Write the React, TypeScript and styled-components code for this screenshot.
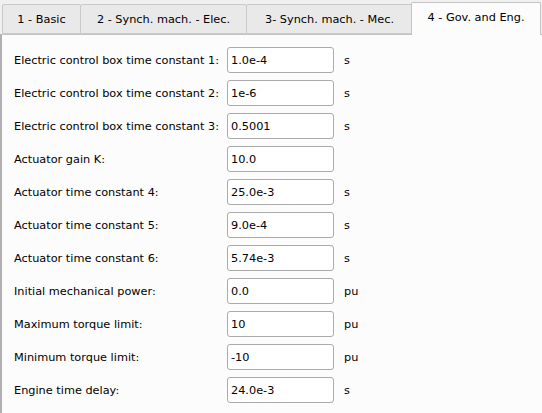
import React from "react";
import styled, { createGlobalStyle } from "styled-components";

const GlobalStyle = createGlobalStyle`
  html, body {
    margin: 0;
    padding: 0;
    background: #f0f0f0;
  }
  body {
    font-family: "DejaVu Sans", "Liberation Sans", sans-serif;
    font-size: 11.3px;
    color: #000;
  }
`;

const Window = styled.div`
  width: 542px;
  height: 413px;
  overflow: hidden;
  background: #f0f0f0;
  padding-top: 2px;
  box-sizing: border-box;
  display: flex;
  flex-direction: column;
`;

const TabBar = styled.div`
  display: flex;
  align-items: flex-end;
  padding-left: 2px;
  height: 32px;
  position: relative;
  z-index: 1;
`;

const Tab = styled.div<{ $active?: boolean; $w: number }>`
  box-sizing: border-box;
  flex-shrink: 0;
  height: ${(p) => (p.$active ? "33px" : "30px")};
  width: ${(p) => p.$w}px;
  margin-left: ${(p) => (p.$active ? "-2px" : "-1px")};
  border: 1px solid ${(p) => (p.$active ? "#c4c4c4" : "#c9c9c9")};
  border-bottom: ${(p) => (p.$active ? "none" : "1px solid #c9c9c9")};
  border-radius: 2px 2px 0 0;
  background: ${(p) => (p.$active ? "#fcfcfc" : "#e9e9e9")};
  display: flex;
  align-items: center;
  justify-content: center;
  padding-bottom: ${(p) => (p.$active ? "3px" : "0")};
  white-space: nowrap;
  margin-bottom: ${(p) => (p.$active ? "-1px" : "0")};
  &:first-child {
    margin-left: 0;
  }
`;

const Panel = styled.div`
  flex: 1;
  background: #fcfcfc;
  border-top: 1px solid #c4c4c4;
  border-left: 2px solid #b0b0b0;
  padding: 12px 0 0 12px;
  display: flex;
  flex-direction: column;
  gap: 7px;
`;

const Row = styled.div`
  display: flex;
  align-items: center;
  height: 26px;
`;

const Label = styled.span`
  width: 213px;
  flex-shrink: 0;
  white-space: nowrap;
`;

const Field = styled.input`
  box-sizing: border-box;
  width: 107px;
  height: 26px;
  border: 1px solid #ababab;
  border-radius: 3px;
  background: #fff;
  font: inherit;
  color: #000;
  padding: 0 0 0 3px;
  outline: none;
`;

const Unit = styled.span`
  margin-left: 10px;
`;

type TabDef = { label: string; w: number; active?: boolean };

const tabs: TabDef[] = [
  { label: "1 - Basic", w: 79 },
  { label: "2 - Synch. mach. - Elec.", w: 167 },
  { label: "3- Synch. mach. - Mec.", w: 167 },
  { label: "4 - Gov. and Eng.", w: 130, active: true },
];

const rows = [
  { label: "Electric control box time constant 1:", value: "1.0e-4", unit: "s" },
  { label: "Electric control box time constant 2:", value: "1e-6", unit: "s" },
  { label: "Electric control box time constant 3:", value: "0.5001", unit: "s" },
  { label: "Actuator gain K:", value: "10.0", unit: "" },
  { label: "Actuator time constant 4:", value: "25.0e-3", unit: "s" },
  { label: "Actuator time constant 5:", value: "9.0e-4", unit: "s" },
  { label: "Actuator time constant 6:", value: "5.74e-3", unit: "s" },
  { label: "Initial mechanical power:", value: "0.0", unit: "pu" },
  { label: "Maximum torque limit:", value: "10", unit: "pu" },
  { label: "Minimum torque limit:", value: "-10", unit: "pu" },
  { label: "Engine time delay:", value: "24.0e-3", unit: "s" },
];

export default function App() {
  return (
    <Window>
      <GlobalStyle />
      <TabBar>
        {tabs.map((t) => (
          <Tab key={t.label} $active={t.active} $w={t.w}>
            {t.label}
          </Tab>
        ))}
      </TabBar>
      <Panel>
        {rows.map((r) => (
          <Row key={r.label}>
            <Label>{r.label}</Label>
            <Field defaultValue={r.value} />
            {r.unit && <Unit>{r.unit}</Unit>}
          </Row>
        ))}
      </Panel>
    </Window>
  );
}
